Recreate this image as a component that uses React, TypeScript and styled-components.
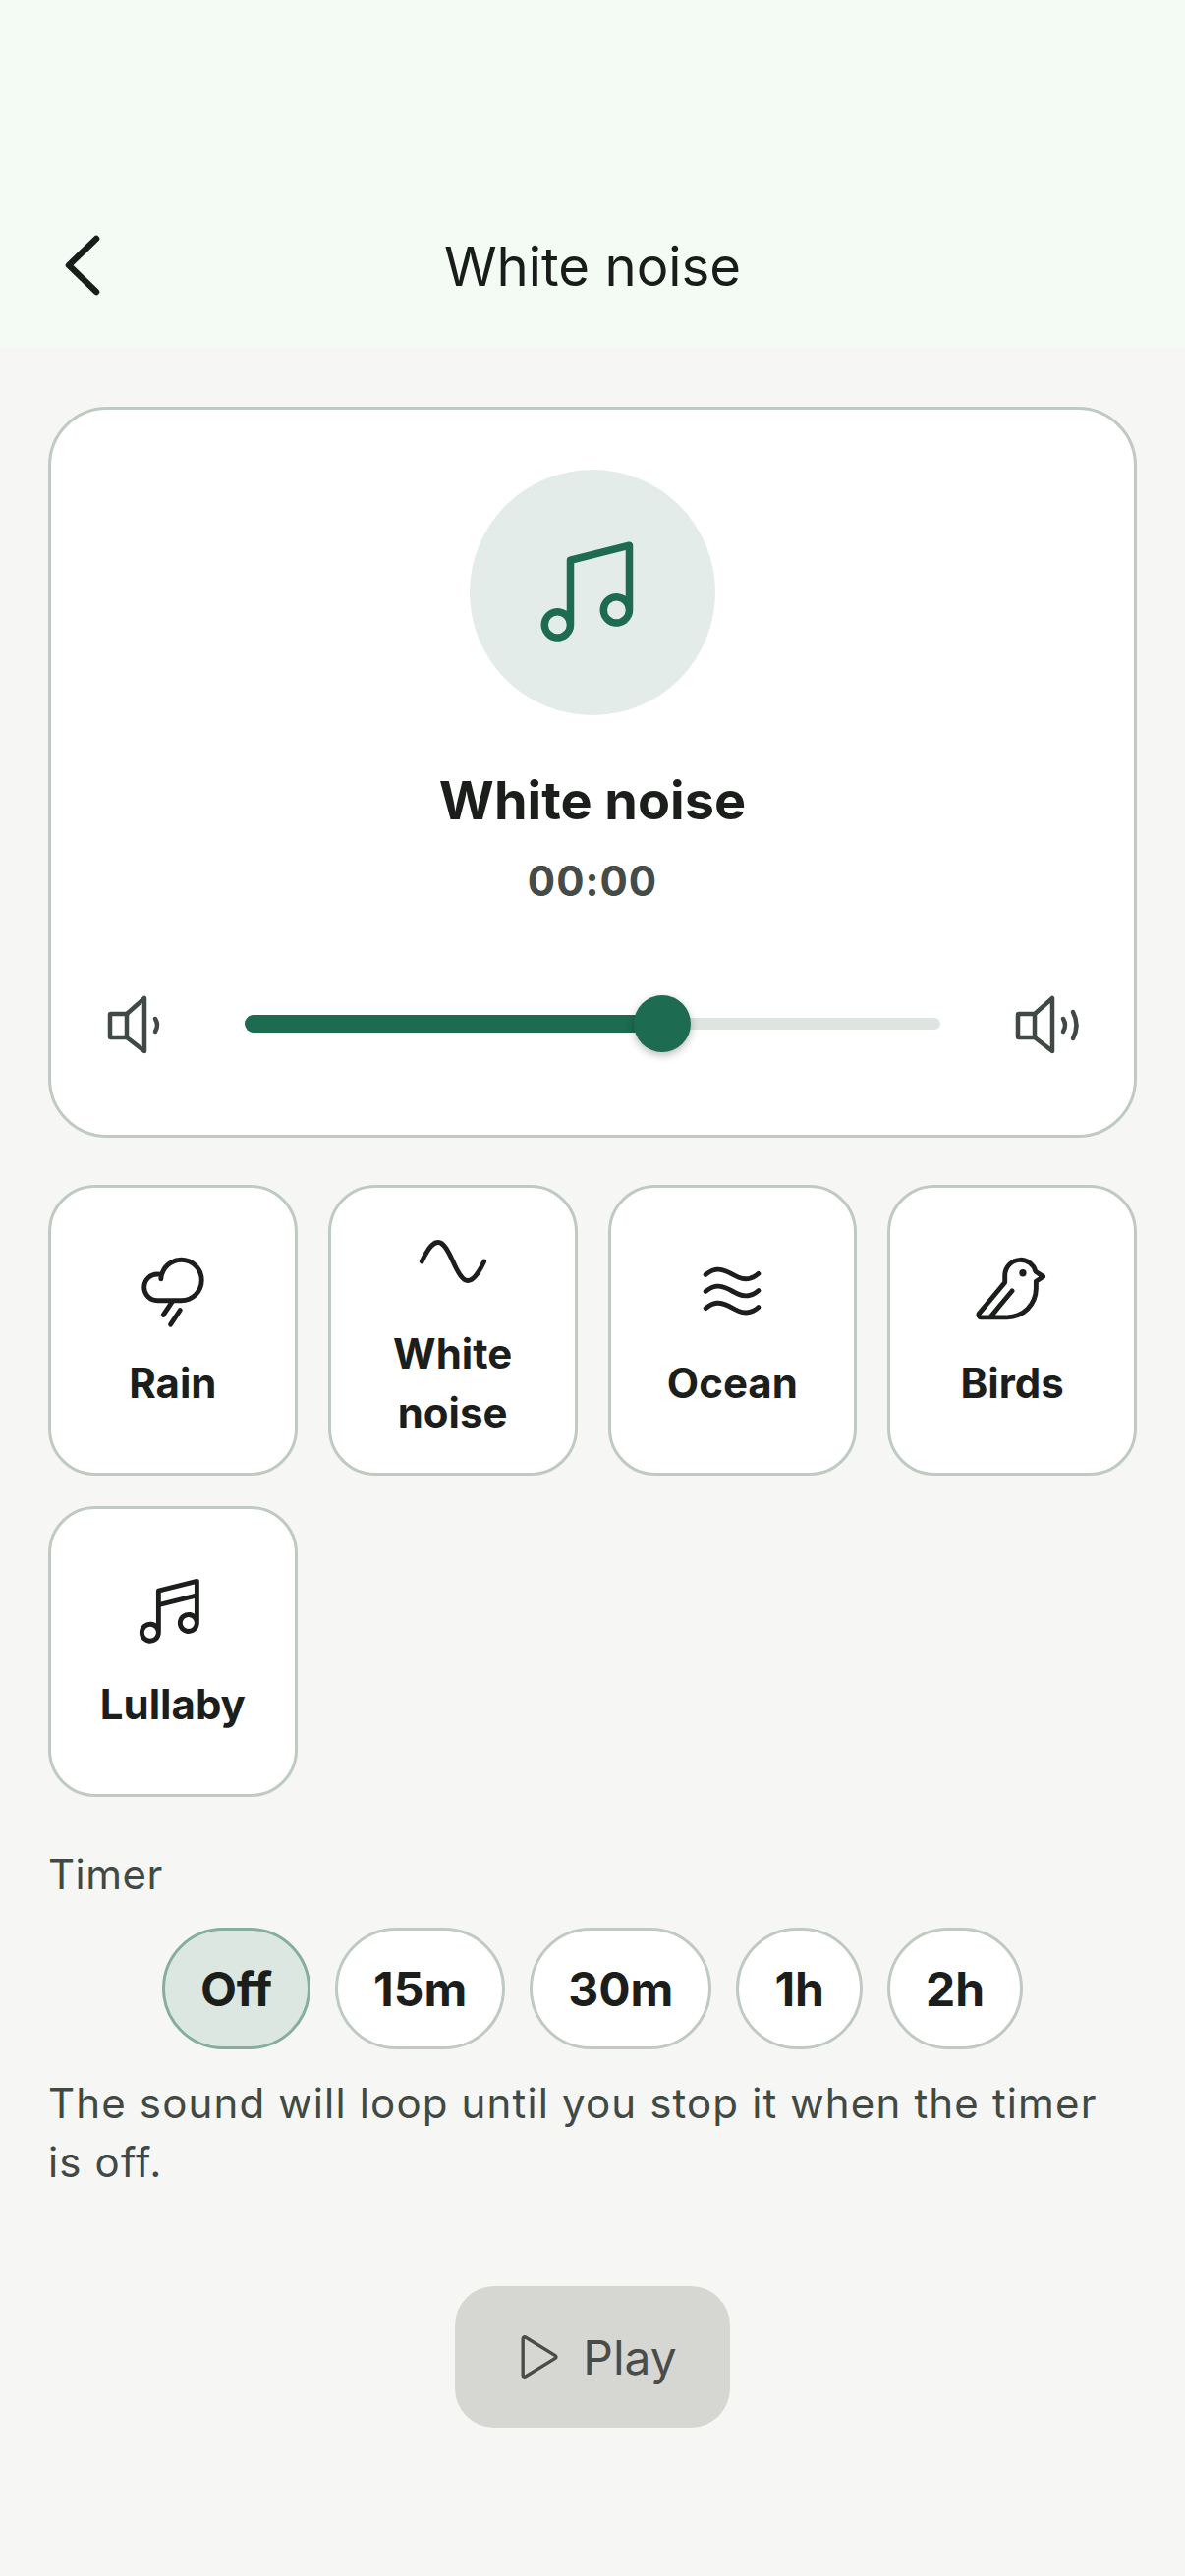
import React from "react";
import styled, { createGlobalStyle } from "styled-components";
import {
  PiBird,
  PiCloudRain,
  PiMusicNotes,
  PiMusicNotesSimple,
  PiPlay,
  PiWaves,
  PiWaveSine,
} from "react-icons/pi";

const Global = createGlobalStyle`
  html, body { margin: 0; padding: 0; background: #f6f6f4; }
  body { font-family: Inter, "Liberation Sans", sans-serif; color: #1c1e1c; }
  * { box-sizing: border-box; }
`;

const Screen = styled.div`
  width: 1206px;
  height: 2622px;
  background: #f6f6f4;
  overflow: hidden;
`;

const Header = styled.header`
  height: 354px;
  background: #f4fbf5;
  padding: 186px 44px 0 44px;
  display: grid;
  grid-template-columns: 84px 1fr 84px;
  align-items: center;
`;

const HeaderTitle = styled.h1`
  margin: 2px 0 0;
  font-size: 54.5px;
  line-height: 84px;
  font-weight: 400;
  text-align: center;
  color: #191c1a;
`;

const BackIcon = styled.svg`
  width: 72px;
  height: 72px;
  color: #191c1a;
  display: block;
`;

const Main = styled.main`
  padding: 60px 49px 0;
  display: flex;
  flex-direction: column;
`;

const Card = styled.section`
  height: 744px;
  background: #fff;
  border: 3px solid #bfcac3;
  border-radius: 60px;
  padding: 61px 0 0;
  display: flex;
  flex-direction: column;
  align-items: center;
`;

const Disc = styled.div`
  width: 250px;
  height: 250px;
  border-radius: 50%;
  background: #e4ece9;
  display: flex;
  align-items: center;
  justify-content: center;
  padding-top: 2px;
  color: #1d6b50;
`;

const CardTitle = styled.h2`
  margin: 51px 0 0;
  font-size: 54px;
  line-height: 72px;
  font-weight: 700;
  color: #1c1e1c;
`;

const Time = styled.div`
  margin-top: 16px;
  font-size: 42px;
  line-height: 60px;
  font-weight: 700;
  letter-spacing: 1px;
  color: #454c48;
`;

const VolumeRow = styled.div`
  margin-top: 79px;
  width: 100%;
  padding-left: 55px;
  display: flex;
  align-items: center;
  color: #404943;
`;

const VolumeIcon = styled.svg`
  width: 72px;
  height: 72px;
  flex: none;
`;

const Track = styled.div`
  width: 708px;
  height: 18px;
  margin: 0 74px 0 70px;
  display: flex;
  align-items: center;
  position: relative;
`;

const TrackFill = styled.div`
  height: 18px;
  background: #1d6b50;
  border-radius: 9px;
`;

const TrackRest = styled.div`
  flex: 1;
  height: 12px;
  background: #dee5e1;
  border-radius: 6px;
`;

const Thumb = styled.div`
  position: absolute;
  top: 50%;
  width: 58px;
  height: 58px;
  margin: -29px 0 0 -29px;
  border-radius: 50%;
  background: #1d6b50;
  box-shadow: 0 3px 8px rgba(0, 0, 0, 0.28);
`;

const TileGrid = styled.div`
  margin-top: 48px;
  display: grid;
  grid-template-columns: repeat(4, 1fr);
  grid-auto-rows: 296px;
  gap: 31px;
`;

const Tile = styled.div`
  background: #fff;
  border: 3px solid #bfcac3;
  border-radius: 48px;
  padding: 5px 16px 0;
  display: flex;
  flex-direction: column;
  align-items: center;
  justify-content: center;
  gap: 25px;
  color: #1c1e1c;
  svg {
    width: 78px;
    height: 78px;
    display: block;
  }
`;

const TileLabel = styled.div`
  font-size: 42px;
  line-height: 60px;
  font-weight: 700;
  text-align: center;
`;

const SectionLabel = styled.div`
  margin-top: 49px;
  font-size: 42px;
  line-height: 60px;
  font-weight: 400;
  letter-spacing: 0.5px;
  color: #404943;
`;

const Chips = styled.div`
  margin-top: 24px;
  display: flex;
  justify-content: center;
  gap: 25px;
`;

const Chip = styled.div<{ $active?: boolean }>`
  height: 124px;
  padding: 0 36px;
  display: flex;
  align-items: center;
  border-radius: 62px;
  border: 3px solid ${(p) => (p.$active ? "#86ae9e" : "#bfcac3")};
  background: ${(p) => (p.$active ? "#dce7e1" : "#fff")};
  font-size: 48px;
  font-weight: 700;
  color: #1c1e1c;
`;

const Hint = styled.p`
  margin: 25px 0 0;
  font-size: 42px;
  line-height: 60px;
  letter-spacing: 1.15px;
  color: #404943;
`;

const PlayRow = styled.div`
  margin-top: 96px;
  display: flex;
  justify-content: center;
`;

const PlayButton = styled.div`
  width: 280px;
  height: 144px;
  border-radius: 40px;
  background: #d6d7d3;
  display: flex;
  align-items: center;
  justify-content: center;
  gap: 22px;
  font-size: 48px;
  font-weight: 400;
  color: #4a4c4a;
  svg {
    width: 54px;
    height: 54px;
  }
`;

const Speaker = ({ waves }: { waves: 1 | 2 }) => (
  <VolumeIcon viewBox="0 0 72 72" fill="none" stroke="currentColor" strokeWidth="4.5" strokeLinecap="round" strokeLinejoin="round">
    <path d="M22 26H6a1 1 0 0 0-1 1v22a1 1 0 0 0 1 1h16z" />
    <path d="M22 26 40 10v54L22 50" />
    <path d="M51 31q4 6.500 0 13" />
    {waves === 2 && <path d="M61 24q7 13.500 0 27" />}
  </VolumeIcon>
);

const tiles = [
  { label: "Rain", Icon: PiCloudRain },
  { label: "White noise", Icon: PiWaveSine },
  { label: "Ocean", Icon: PiWaves },
  { label: "Birds", Icon: PiBird },
  { label: "Lullaby", Icon: PiMusicNotes },
];

const chips = ["Off", "15m", "30m", "1h", "2h"];

export default function App() {
  return (
    <Screen>
      <Global />
      <Header>
        <BackIcon viewBox="0 0 72 72" fill="none" stroke="currentColor" strokeWidth="6.5" strokeLinecap="round" strokeLinejoin="round">
          <path d="M54 9 26 36l28 27" />
        </BackIcon>
        <HeaderTitle>White noise</HeaderTitle>
      </Header>
      <Main>
        <Card>
          <Disc>
            <PiMusicNotesSimple size={120} />
          </Disc>
          <CardTitle>White noise</CardTitle>
          <Time>00:00</Time>
          <VolumeRow>
            <Speaker waves={1} />
            <Track>
              <TrackFill style={{ width: "60%" }} />
              <TrackRest />
              <Thumb style={{ left: "60%" }} />
            </Track>
            <Speaker waves={2} />
          </VolumeRow>
        </Card>
        <TileGrid>
          {tiles.map(({ label, Icon }) => (
            <Tile key={label}>
              <Icon />
              <TileLabel>{label}</TileLabel>
            </Tile>
          ))}
        </TileGrid>
        <SectionLabel>Timer</SectionLabel>
        <Chips>
          {chips.map((c, i) => (
            <Chip key={c} $active={i === 0}>
              {c}
            </Chip>
          ))}
        </Chips>
        <Hint>The sound will loop until you stop it when the timer is off.</Hint>
        <PlayRow>
          <PlayButton>
            <PiPlay />
            Play
          </PlayButton>
        </PlayRow>
      </Main>
    </Screen>
  );
}
